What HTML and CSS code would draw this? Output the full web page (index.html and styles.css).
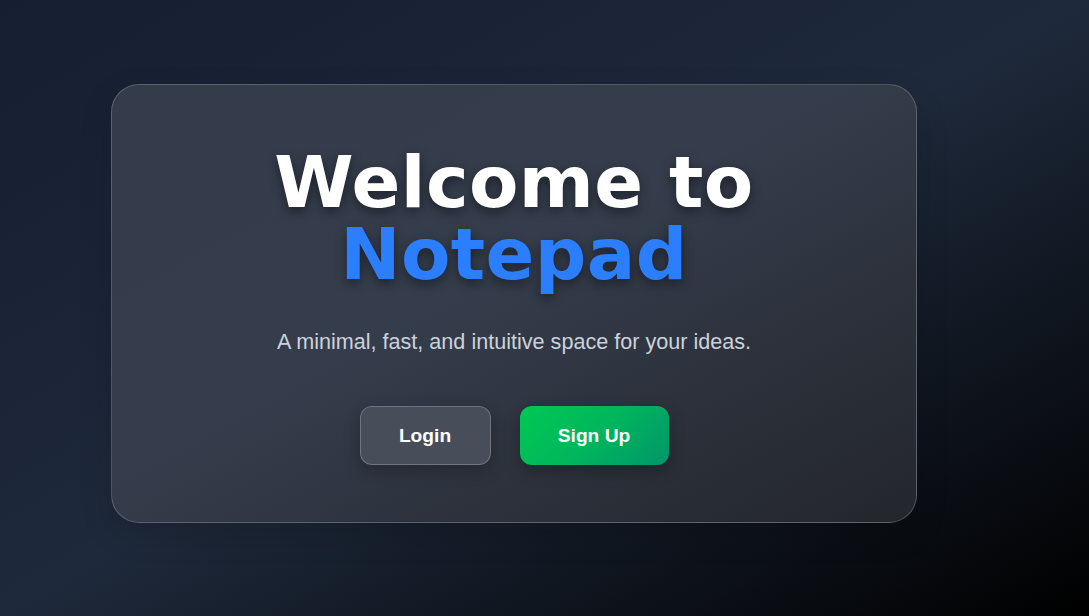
FILE: index.html
```html
<!DOCTYPE html>
<html lang="en">
<head>
<meta charset="utf-8">
<title>Notepad</title>
<link rel="stylesheet" href="styles.css">
</head>
<body>
<main class="page">
  <section class="card">
    <h1 class="title">Welcome to<br><span class="accent">Notepad</span></h1>
    <p class="subtitle">A minimal, fast, and intuitive space for your ideas.</p>
    <div class="actions">
      <button class="btn btn-login">Login</button>
      <button class="btn btn-signup">Sign Up</button>
    </div>
  </section>
</main>
</body>
</html>
```

FILE: styles.css
```css
* { box-sizing: border-box; }
html, body { margin: 0; height: 100%; }
body {
  font-family: "Liberation Sans", Arial, sans-serif;
  background: linear-gradient(to bottom right, #161e31 0%, #1e293b 50%, #000 100%);
  overflow: hidden;
}
.page {
  height: 100%;
  padding: 84px 0 0 111px;
}
.card {
  width: 806px;
  height: 439px;
  border: 1px solid rgba(255,255,255,0.2);
  border-radius: 28px;
  background: linear-gradient(to bottom right, #343c4b 0%, #353d4c 45%, #2c313b 72%, #23262c 100%);
  box-shadow: 0 12px 32px rgba(0,0,0,0.15);
  display: flex;
  flex-direction: column;
  align-items: center;
  padding-top: 61px;
}
.title {
  margin: 0;
  font-family: "DejaVu Sans", sans-serif;
  font-weight: 700;
  font-size: 72px;
  line-height: 72px;
  letter-spacing: 0.4px;
  color: #ffffff;
  text-align: center;
  text-shadow: 0 4px 12px rgba(0,0,0,0.45);
}
.accent { color: #2b7fff; }
.subtitle {
  margin: 39px 0 0;
  font-size: 21.6px;
  line-height: 25px;
  color: #cbd2dc;
}
.actions {
  margin-top: 52px;
  display: flex;
  gap: 29px;
}
.btn {
  height: 59px;
  padding: 0;
  border-radius: 12px;
  font-family: "Liberation Sans", Arial, sans-serif;
  font-weight: 700;
  font-size: 19.2px;
  color: #fff;
  cursor: pointer;
  box-shadow: 0 6px 16px rgba(0,0,0,0.25);
}
.btn-login {
  width: 131px;
  background: #474e5a;
  border: 1px solid rgba(255,255,255,0.22);
}
.btn-signup {
  width: 149px;
  border: none;
  background: linear-gradient(135deg, #00c853 0%, #00b65c 50%, #00966a 100%);
}
```
